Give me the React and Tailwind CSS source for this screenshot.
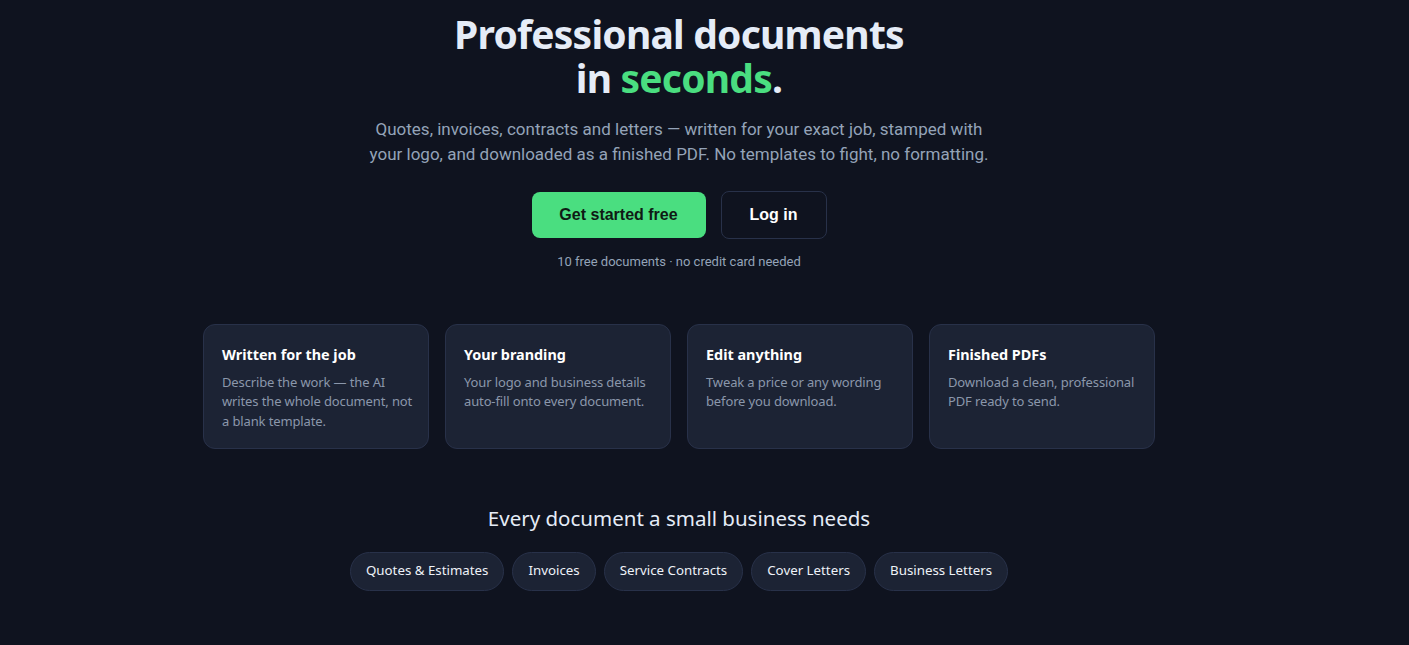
import React from 'react';

const features = [
    { title: 'Written for the job', text: 'Describe the work — the AI writes the whole document, not a blank template.' },
    { title: 'Your branding', text: 'Your logo and business details auto-fill onto every document.' },
    { title: 'Edit anything', text: 'Tweak a price or any wording before you download.' },
    { title: 'Finished PDFs', text: 'Download a clean, professional PDF ready to send.' },
];

const docTypes = ['Quotes & Estimates', 'Invoices', 'Service Contracts', 'Cover Letters', 'Business Letters'];

function App() {
    return (
        <div className="min-h-screen w-full bg-[#0f131f] pr-[51px] text-[#e2e8f0]" style={{ fontFamily: '"Noto Sans", "Open Sans", sans-serif' }}>
            {/* Hero */}
            <section className="flex flex-col items-center text-center pt-[12px]">
                <h1 className="text-[39px] font-bold leading-[44px] tracking-[-0.02em] text-[#e5ecf7]">
                    Professional documents<br />
                    in <span className="text-[#4ade80]">seconds</span>.
                </h1>
                <p className="mt-[17px] max-w-[640px] text-[17px] leading-[25px] text-[#94a3b8]" style={{ fontFamily: 'Roboto, sans-serif' }}>
                    Quotes, invoices, contracts and letters — written for your exact job, stamped with your logo, and downloaded as a finished PDF. No templates to fight, no formatting.
                </p>
                <div className="mt-[25px] flex gap-[15px]" style={{ fontFamily: '"Liberation Sans", Arial, sans-serif' }}>
                    <button className="h-[46px] w-[174px] rounded-lg bg-[#4ade80] text-base font-bold text-[#0f1a14]">
                        Get started free
                    </button>
                    <button className="h-[48px] w-[106px] -mt-px rounded-lg border border-[#283149] bg-[#0f131f] text-base font-bold text-white">
                        Log in
                    </button>
                </div>
                <p className="mt-[13px] text-[13px] text-[#94a3b8]" style={{ fontFamily: 'Roboto, sans-serif' }}>
                    10 free documents · no credit card needed
                </p>
            </section>

            {/* Features */}
            <section className="mt-[52px] flex justify-center gap-4">
                {features.map((f) => (
                    <div key={f.title} className="h-[125px] w-[226px] rounded-xl border border-[#283149] bg-[#1c2334] pl-[18px] pr-[10px] pt-[20px] text-left">
                        <h3 className="text-[14.4px] font-bold leading-5 text-white">{f.title}</h3>
                        <p className="mt-[8px] text-[13px] leading-[19.5px] tracking-[-0.01em] text-[#8b97ab]">{f.text}</p>
                    </div>
                ))}
            </section>

            {/* Document types */}
            <section className="mt-[55px] flex flex-col items-center">
                <h2 className="text-[20.5px] leading-7 text-[#e5ecf7]">Every document a small business needs</h2>
                <div className="mt-[20px] flex gap-2">
                    {docTypes.map((d) => (
                        <span key={d} className="flex h-[39px] items-center rounded-full border border-[#283149] bg-[#1c2334] px-[15px] text-[13.3px] text-[#eef2f8]">
                            {d}
                        </span>
                    ))}
                </div>
            </section>
        </div>
    );
}

export default App;
